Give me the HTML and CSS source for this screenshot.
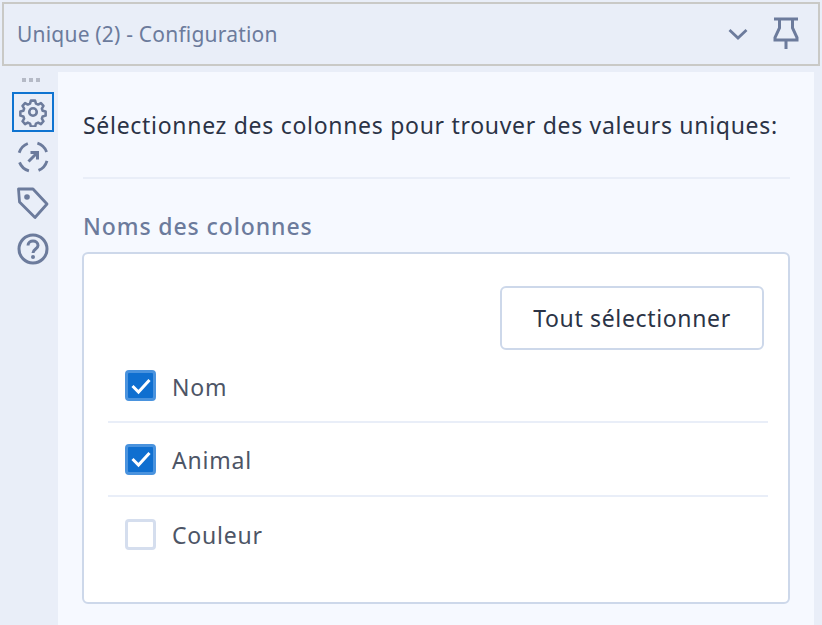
FILE: index.html
```html
<!DOCTYPE html>
<html lang="fr">
<head>
<meta charset="utf-8">
<title>Unique (2) - Configuration</title>
<link rel="stylesheet" href="styles.css">
</head>
<body>
<div class="app">
  <header class="header">
    <span class="title">Unique (2) - Configuration</span>
    <svg class="chevron" width="20" height="12" viewBox="0 0 20 12"><path d="M1.5 2 L10 10 L18.5 2" fill="none" stroke="#6c7b9c" stroke-width="2.8"/></svg>
    <svg class="pin" width="26" height="34" viewBox="0 0 26 34"><path d="M1 2 H25 M6.5 2 V11 L2 20.5 V23 H24 V20.5 L19.5 11 V2 M13 23 V32" fill="none" stroke="#6c7b9c" stroke-width="3"/></svg>
  </header>
  <div class="main">
    <nav class="rail">
      <div class="grip"><i></i><i></i><i></i></div>
      <div class="tool active">
        <svg width="30" height="30" viewBox="0 0 32 32"><path d="M13.5 2.5h5l1 3.6 2.6 1.1 3.3-1.8 3 3.4-1.9 3.2.9 2.5 3.6 1v4.8l-3.6 1-.9 2.5 1.9 3.2-3 3.4-3.3-1.8-2.6 1.1-1 3.6h-5l-1-3.6-2.6-1.1-3.3 1.8-3-3.4 1.9-3.2-.9-2.5-3.6-1v-4.8l3.6-1 .9-2.5L3.6 8.8l3-3.4 3.3 1.8 2.6-1.1z" transform="translate(1.6 1.6) scale(.9)" fill="none" stroke="#6c7b9c" stroke-width="3" stroke-linejoin="round"/><circle cx="16" cy="16" r="4" fill="none" stroke="#6c7b9c" stroke-width="2.8"/></svg>
      </div>
      <div class="tool">
        <svg width="34" height="34" viewBox="0 0 34 34"><circle cx="17" cy="17" r="14.5" fill="none" stroke="#6c7b9c" stroke-width="2.8" stroke-dasharray="13 9.8" stroke-dashoffset="-4"/><path d="M12.5 21.5 L21 13 M14.5 12.5 H21.5 V19.5" fill="none" stroke="#6c7b9c" stroke-width="3"/></svg>
      </div>
      <div class="tool">
        <svg width="34" height="34" viewBox="0 0 34 34"><path d="M2.5 3 L17 3 L31 18 L19 31.5 L3.5 16 Z" fill="none" stroke="#6c7b9c" stroke-width="2.8" stroke-linejoin="round"/><circle cx="11" cy="11" r="2.8" fill="#6c7b9c"/></svg>
      </div>
      <div class="tool">
        <svg width="32" height="32" viewBox="0 0 32 32"><circle cx="16" cy="16" r="14" fill="none" stroke="#6c7b9c" stroke-width="3"/><path d="M11 12.5 C11 6.5 21 6.5 21 12.5 C21 16 16 16 16 20" fill="none" stroke="#6c7b9c" stroke-width="3"/><circle cx="16" cy="24" r="2" fill="#6c7b9c"/></svg>
      </div>
    </nav>
    <main class="content">
      <p class="intro">Sélectionnez des colonnes pour trouver des valeurs uniques:</p>
      <hr class="rule">
      <h2 class="label">Noms des colonnes</h2>
      <section class="card">
        <div class="actions"><button class="btn">Tout sélectionner</button></div>
        <ul class="list">
          <li class="row"><span class="box on"><svg width="22" height="18" viewBox="0 0 22 18"><path d="M2.5 9 L8.5 15 L19.5 3" fill="none" stroke="#fff" stroke-width="3"/></svg></span><span class="name">Nom</span></li>
          <li class="row"><span class="box on"><svg width="22" height="18" viewBox="0 0 22 18"><path d="M2.5 9 L8.5 15 L19.5 3" fill="none" stroke="#fff" stroke-width="3"/></svg></span><span class="name">Animal</span></li>
          <li class="row"><span class="box"></span><span class="name">Couleur</span></li>
        </ul>
      </section>
    </main>
  </div>
</div>
</body>
</html>
```

FILE: styles.css
```css
* { box-sizing: border-box; }
html, body { margin: 0; height: 100%; }
body {
  background: #e9eef8;
  font-family: "Noto Sans", "Open Sans", sans-serif;
  overflow: hidden;
}
.app { width: 822px; height: 625px; display: flex; flex-direction: column; }
.header {
  margin: 2px 2px 0;
  height: 64px;
  flex: none;
  border: 2px solid #c9c9c6;
  background: #e9eef8;
  display: flex;
  align-items: center;
  padding: 0 19px 0 13px;
}
.title { font-size: 21px; letter-spacing: .2px; color: #6c7b9c; flex: 1; }
.chevron { margin-right: 25px; }
.pin { display: block; }
.main { flex: 1; display: flex; margin-top: 6px; min-height: 0; padding-right: 8px; }
.rail { width: 58px; flex: none; display: flex; flex-direction: column; align-items: flex-start; padding-left: 12px; }
.grip { width: 38px; height: 20px; display: flex; gap: 3px; justify-content: center; align-items: flex-start; padding-top: 6px; }
.grip i { width: 4px; height: 4px; background: #b5bac6; display: block; }
.tool { width: 42px; height: 40px; display: flex; align-items: center; justify-content: center; margin-bottom: 6px; border: 2px solid transparent; }
.tool.active { border-color: #0f74d1; margin-bottom: 5px; }
.content { flex: 1; background: #f6f9ff; padding: 0 24px 21px 25px; display: flex; flex-direction: column; min-width: 0; }
.intro { margin: 35px 0 0; height: 36px; line-height: 36px; font-size: 23px; letter-spacing: .7px; color: #2b3346; white-space: nowrap; }
.rule { margin: 34px 0 0; border: 0; height: 2px; background: #e9eef8; }
.label { margin: 29px 0 0; height: 36px; line-height: 36px; font-size: 23px; letter-spacing: .9px; font-weight: 500; color: #6c7b9c; }
.card { margin-top: 8px; margin-left: -1px; flex: 1; background: #fff; border: 2px solid #cdd8ea; border-radius: 6px; padding: 32px 20px 0 24px; }
.actions { display: flex; justify-content: flex-end; padding-right: 4px; }
.btn { width: 264px; height: 64px; background: #fff; border: 2px solid #cdd8ea; border-radius: 6px; font: inherit; font-size: 23px; letter-spacing: .65px; color: #2b3346; padding: 0; }
.list { list-style: none; margin: 0; padding: 0; }
.row { height: 74px; display: flex; align-items: center; padding-left: 17px; border-bottom: 2px solid #e9eef8; }
.row:last-child { border-bottom: 0; }
.row:first-child { height: 73px; }
.box { width: 31px; height: 31px; border: 3px solid #d5deee; border-radius: 4px; background: #fff; display: flex; align-items: center; justify-content: center; flex: none; }
.box.on { background: #0f6fd0; border-color: #4a93de; }
.name { margin-left: 16px; padding-top: 2px; font-size: 23px; letter-spacing: .8px; color: #4d5566; }
```
